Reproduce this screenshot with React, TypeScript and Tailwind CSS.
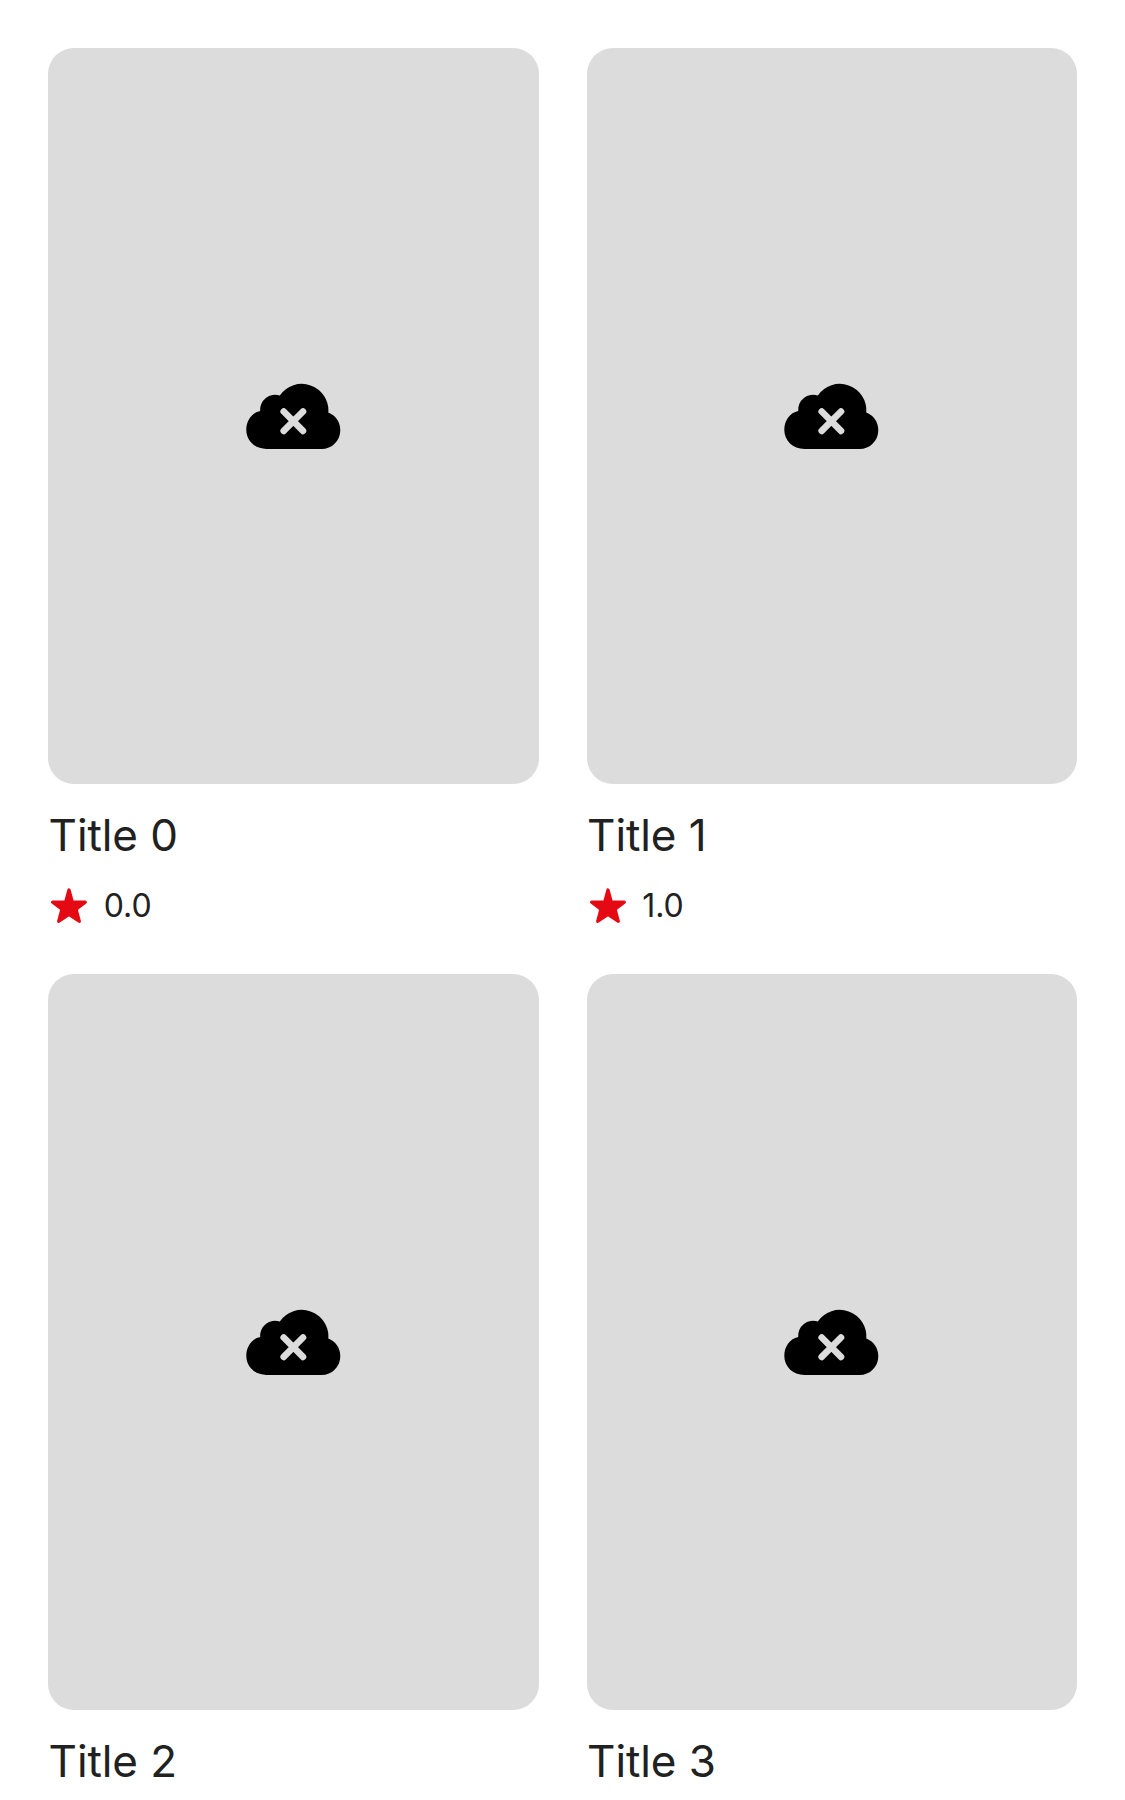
function CloudOff() {
  return (
    <svg className="mr-[0.6px] h-[90px] w-[120px]" viewBox="-3 1 120 90" aria-hidden="true">
      <path
        fill="#000"
        d="M30.5 79C18.8 79 10.3 70.6 10.3 59.8C10.3 50.4 16 42.6 24.2 41A15 15 0 0 1 43.8 25.5A26.6 26.6 0 0 1 92.3 42.6C99.4 45.2 104.3 52 104.3 60.2C104.3 70.8 96 79 85.5 79Z"
      />
      <path d="M47.7 41.5L67 60.9M67 41.5L47.7 60.9" stroke="#dcdcdc" strokeWidth="6.6" strokeLinecap="round" />
    </svg>
  );
}

function Star() {
  return (
    <svg className="h-9 w-9" viewBox="0 0 36 36" aria-hidden="true">
      <path
        fill="#e50914"
        stroke="#e50914"
        strokeWidth="3.4"
        strokeLinejoin="round"
        d="M18 2.1L21.2 14L34.2 14.1L25 21.2L28.2 33.2L18 26.3L7.8 33.2L11 21.2L1.8 14.1L14.8 14Z"
      />
    </svg>
  );
}

function Card({ title, rating }: { title: string; rating?: string }) {
  return (
    <article className="min-h-[816px]">
      <div className="flex h-[736px] items-center justify-center rounded-[26px] bg-[#dcdcdc]">
        <CloudOff />
      </div>
      <h2 className="mt-6 pl-[0.6px] text-[44px] leading-[54px] tracking-[-0.1px]">{title}</h2>
      {rating && (
        <div className="mt-[26px] mb-[50px] flex items-center gap-[16.7px] pl-[3px]">
          <Star />
          <span className="text-[32px] leading-9">{rating}</span>
        </div>
      )}
    </article>
  );
}

const movies = [
  { title: "Title 0", rating: "0.0" },
  { title: "Title 1", rating: "1.0" },
  { title: "Title 2" },
  { title: "Title 3" },
];

export default function App() {
  return (
    <main className="h-[1800px] w-[1125px] overflow-hidden bg-white px-12 pt-12 font-['Inter',sans-serif] text-[#212121]">
      <div className="grid grid-cols-2 gap-x-12">
        {movies.map((m) => (
          <Card key={m.title} {...m} />
        ))}
      </div>
    </main>
  );
}
